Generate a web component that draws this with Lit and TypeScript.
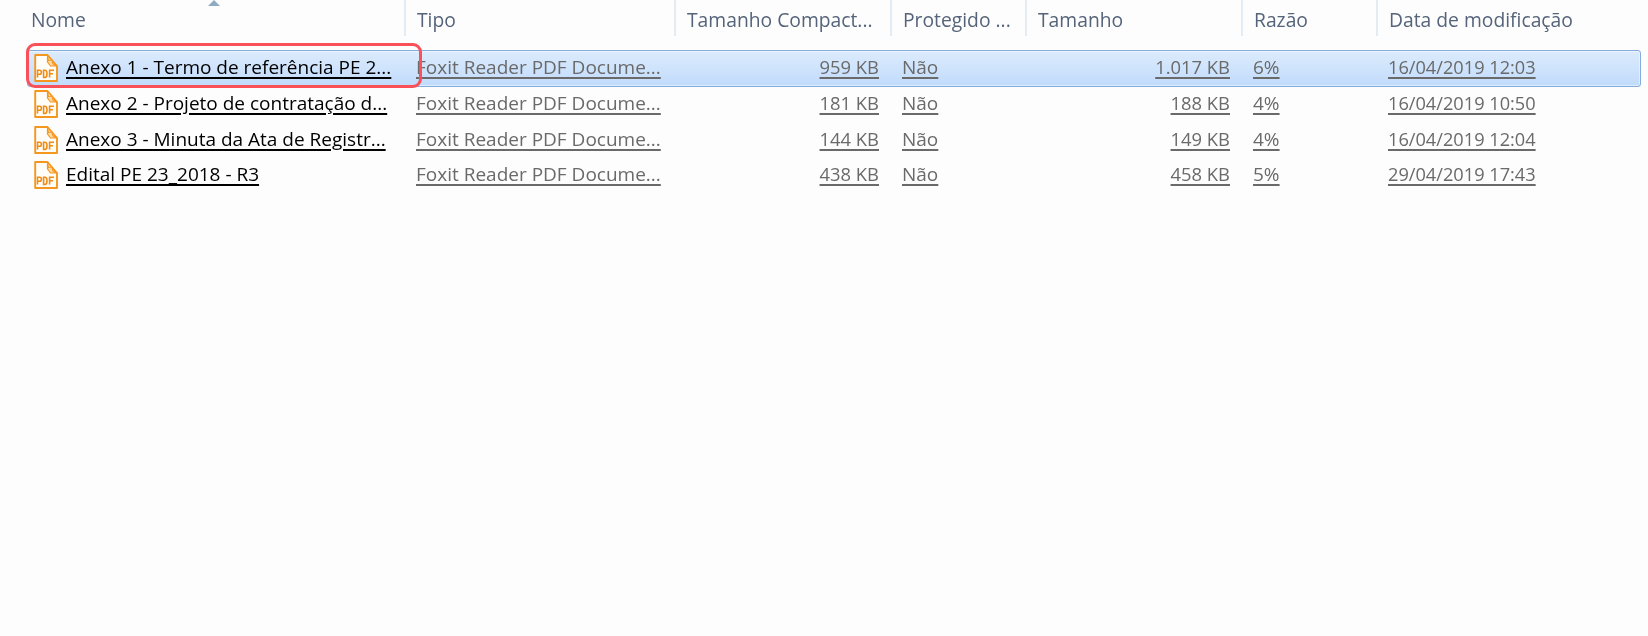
import { LitElement, html, css, svg } from "lit";
import { customElement } from "lit/decorators.js";

const COLS = ["Nome", "Tipo", "Tamanho Compact...", "Protegido ...", "Tamanho", "Razão", "Data de modificação"];

const ROWS = [
  ["Anexo 1 - Termo de referência PE 2...", "959 KB", "Não", "1.017 KB", "6%", "16/04/2019 12:03"],
  ["Anexo 2 - Projeto de contratação d...", "181 KB", "Não", "188 KB", "4%", "16/04/2019 10:50"],
  ["Anexo 3 - Minuta da Ata de Registr...", "144 KB", "Não", "149 KB", "4%", "16/04/2019 12:04"],
  ["Edital PE 23_2018 - R3", "438 KB", "Não", "458 KB", "5%", "29/04/2019 17:43"],
];

const pdfIcon = svg`<svg class="ico" viewBox="0 0 24 28" width="24" height="28" fill="none">
  <path d="M1.2 1H13.5L23 12V27H1.2Z" fill="#fffdf8" stroke="#f5971f" stroke-width="1.9" stroke-linejoin="round"/>
  <path d="M13.5 1L14.5 6.5L18 6L19 10L23 12L16.5 12L13.5 8Z" fill="#fbd9a8" stroke="#f5971f" stroke-width="1.2" stroke-linejoin="round"/>
  <path d="M3.5 23.5V16.2H5.7Q7.4 16.2 7.4 18.2T5.7 20.2H3.5M9.6 16.2V23.5H10.8Q13 23.5 13 19.8T10.8 16.2ZM15.6 23.5V16.2H20M15.6 19.8H19" stroke="#f08c14" stroke-width="1.6"/>
</svg>`;

@customElement("app-root")
export class AppRoot extends LitElement {
  static styles = css`
    :host {
      display: block;
      position: relative;
      width: 1648px;
      height: 636px;
      overflow: hidden;
      background: #fdfdfd;
      font-family: "Open Sans", "Noto Sans", sans-serif;
      font-size: 19px;
    }
    .content {
      filter: blur(0.4px);
    }
    .grid {
      display: grid;
    }
    .head {
      grid-template-columns: 406px 270px 216px 135px 216px 135px 1fr;
      height: 39px;
      color: #55647a;
      margin-bottom: 11px;
      font-size: 19.3px;
    }
    .hcell {
      display: flex;
      align-items: center;
      padding: 2px 0 0 11px;
      box-sizing: border-box;
      height: 36px;
      border-right: 2px solid #e4ecf3;
      white-space: nowrap;
      overflow: hidden;
    }
    .hcell:first-child {
      padding-left: 31px;
    }
    .hcell:last-child {
      border-right: none;
    }
    .row {
      grid-template-columns: 406px 270px 216px 136px 215px 135px 1fr;
      height: 35.5px;
      align-items: center;
      margin-right: 7px;
      color: #6a6a6a;
    }
    .row.sel {
      grid-template-columns: 378px 270px 216px 136px 215px 135px 1fr;
      height: 36.5px;
      border: 1px solid #84acdd;
      border-radius: 3px;
      margin-left: 27px;
      background: linear-gradient(#dcebfc, #c1dbfc);
      box-shadow: inset 0 0 0 1px rgba(255, 255, 255, 0.45);
      box-sizing: border-box;
    }
    .cell {
      white-space: nowrap;
      padding: 0 0 2px 10px;
      line-height: 30px;
      text-decoration: underline;
      text-decoration-thickness: 1.5px;
      text-underline-offset: 3px;
    }
    .name {
      display: flex;
      align-items: center;
      gap: 8px;
      padding: 0 0 0 34px;
      color: #000;
      text-decoration: none;
    }
    .row.sel .name {
      padding-left: 6px;
    }
    .name span {
      margin-top: -2px;
      font-size: 19px;
      text-decoration: underline;
      text-decoration-thickness: 1.7px;
      text-underline-offset: 3px;
    }
    .num {
      text-align: right;
      padding: 0 13px 2px 0;
      font-size: 18.4px;
    }
    .date {
      font-size: 18.2px;
    }
    .ico {
      flex: none;
    }
    .arrow {
      position: absolute;
      left: 207px;
      top: 0;
    }
    .mark {
      position: absolute;
      left: 26px;
      top: 43px;
      width: 396px;
      height: 45px;
      box-sizing: border-box;
      border: 3px solid #fa5058;
      border-radius: 9px;
    }
  `;

  render() {
    return html`
      <div class="content">
        <div class="grid head">
          ${COLS.map((c) => html`<div class="hcell">${c}</div>`)}
        </div>
        ${ROWS.map(
          (r, i) => html`<div class="grid row ${i === 0 ? "sel" : ""}">
            <div class="cell name">${pdfIcon}<span>${r[0]}</span></div>
            <div class="cell">Foxit Reader PDF Docume...</div>
            <div class="cell num">${r[1]}</div>
            <div class="cell">${r[2]}</div>
            <div class="cell num">${r[3]}</div>
            <div class="cell">${r[4]}</div>
            <div class="cell date">${r[5]}</div>
          </div>`
        )}
      </div>
      <svg class="arrow" width="14" height="6" viewBox="0 0 14 6"><path d="M7 0L13 6H1Z" fill="#8fabc2"/></svg>
      <div class="mark"></div>
    `;
  }
}
